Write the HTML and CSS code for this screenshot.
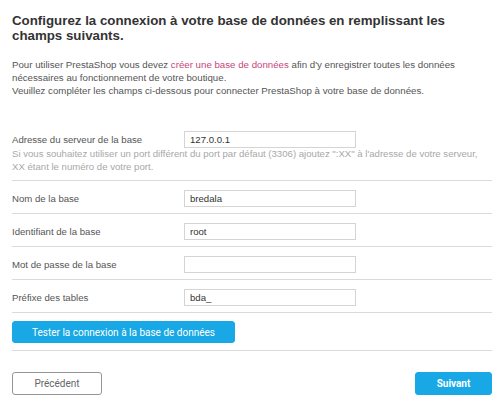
FILE: index.html
```html
<!DOCTYPE html>
<html lang="fr">
<head>
<meta charset="utf-8">
<title>Configuration de la base de données</title>
<link rel="stylesheet" href="styles.css">
</head>
<body>
<div class="page">
  <h1 class="title">Configurez la connexion à votre base de données en remplissant les champs suivants.</h1>
  <p class="intro">Pour utiliser PrestaShop vous devez <a class="link" href="#">créer une base de données</a> afin d'y enregistrer toutes les données<br>nécessaires au fonctionnement de votre boutique.<br>Veuillez compléter les champs ci-dessous pour connecter PrestaShop à votre base de données.</p>

  <form class="form">
    <div class="row row-first">
      <div class="field">
        <label class="label" for="server">Adresse du serveur de la base</label>
        <input class="input" id="server" type="text" value="127.0.0.1">
      </div>
      <p class="hint">Si vous souhaitez utiliser un port différent du port par défaut (3306) ajoutez ":XX" à l'adresse de votre serveur,<br>XX étant le numéro de votre port.</p>
    </div>
    <div class="row">
      <div class="field">
        <label class="label" for="name">Nom de la base</label>
        <input class="input" id="name" type="text" value="bredala">
      </div>
    </div>
    <div class="row">
      <div class="field">
        <label class="label" for="login">Identifiant de la base</label>
        <input class="input" id="login" type="text" value="root">
      </div>
    </div>
    <div class="row">
      <div class="field">
        <label class="label" for="pass">Mot de passe de la base</label>
        <input class="input" id="pass" type="password" value="">
      </div>
    </div>
    <div class="row">
      <div class="field">
        <label class="label" for="prefix">Préfixe des tables</label>
        <input class="input" id="prefix" type="text" value="bda_">
      </div>
    </div>
    <div class="row row-test">
      <button class="btn btn-blue btn-test" type="button">Tester la connexion à la base de données</button>
    </div>
  </form>

  <div class="nav">
    <button class="btn btn-prev" type="button">Précédent</button>
    <button class="btn btn-blue btn-next" type="button">Suivant</button>
  </div>
</div>
</body>
</html>
```

FILE: styles.css
```css
* { box-sizing: border-box; }

html, body {
  margin: 0;
  padding: 0;
  background: #ffffff;
}

body {
  font-family: "Liberation Sans", Arial, sans-serif;
  color: #555555;
}

.page {
  width: 480px;
  margin-left: 12px;
  padding-top: 14px;
}

.title {
  margin: 0;
  font-size: 13.3px;
  line-height: 14.6px;
  font-weight: bold;
  color: #333333;
}

.intro {
  margin: 16px 0 0;
  font-size: 9.7px;
  line-height: 12.7px;
  color: #555555;
}

.link {
  color: #c8457c;
  text-decoration: none;
}

.form {
  margin-top: 25px;
}

.row {
  padding: 9px 0 6px;
  border-bottom: 1px solid #dadada;
}

.row-first {
  padding-bottom: 7px;
}

.field {
  display: flex;
  align-items: center;
}

.label {
  width: 172px;
  font-size: 9.6px;
  color: #555555;
}

.input {
  width: 172px;
  height: 17px;
  margin: 0;
  padding: 0 5px;
  border: 1px solid #d4d4d4;
  border-radius: 0;
  font-family: "Liberation Sans", Arial, sans-serif;
  font-size: 9.6px;
  color: #333333;
  background: #ffffff;
  outline: none;
}

.hint {
  margin: 0;
  font-size: 9.6px;
  line-height: 12.5px;
  color: #a8a8a8;
}

.row-test {
  padding: 8px 0 7px;
}

.btn {
  margin: 0;
  font-family: Roboto, "Liberation Sans", Arial, sans-serif;
  font-size: 10px;
  border-radius: 3px;
  cursor: pointer;
}

.btn-blue {
  background: #17a8e5;
  border: 1px solid #17a8e5;
  color: #ffffff;
}

.btn-test {
  width: 223px;
  height: 22px;
  padding: 0;
}

.nav {
  margin-top: 21px;
  display: flex;
  justify-content: space-between;
  align-items: center;
}

.btn-prev {
  width: 90px;
  height: 23px;
  padding: 0;
  background: #ffffff;
  border: 1.5px solid #959595;
  color: #666666;
}

.btn-next {
  width: 77px;
  height: 23px;
  padding: 0;
  font-weight: bold;
}
```
